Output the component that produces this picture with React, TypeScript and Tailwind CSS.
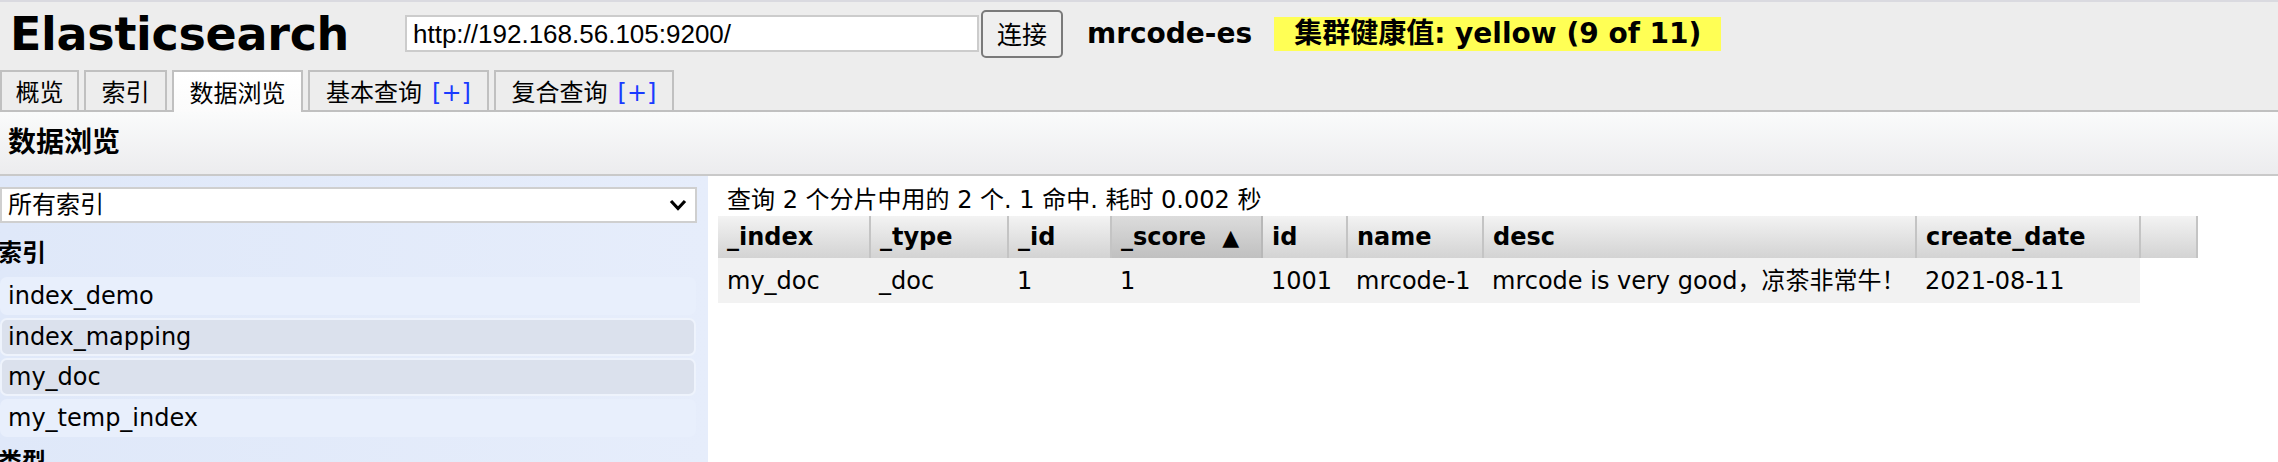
import React from "react";

const tabs = [
  { label: "概览", w: "w-[79px]", active: false, plus: false },
  { label: "索引", w: "w-[83px]", active: false, plus: false },
  { label: "数据浏览", w: "w-[131px]", active: true, plus: false },
  { label: "基本查询", w: "w-[181px]", active: false, plus: true },
  { label: "复合查询", w: "w-[180px]", active: false, plus: true },
];

const cols = [
  { name: "_index", w: "w-[152px]", sorted: false },
  { name: "_type", w: "w-[138px]", sorted: false },
  { name: "_id", w: "w-[103px]", sorted: false },
  { name: "_score", w: "w-[151px]", sorted: true },
  { name: "id", w: "w-[85px]", sorted: false },
  { name: "name", w: "w-[136px]", sorted: false },
  { name: "desc", w: "w-[433px]", sorted: false },
  { name: "create_date", w: "w-[224px]", sorted: false },
  { name: "", w: "w-[57px]", sorted: false },
];

const row = ["my_doc", "_doc", "1", "1", "1001", "mrcode-1", "mrcode is very good，凉茶非常牛！", "2021-08-11"];

const indices = [
  { name: "index_demo", sel: false },
  { name: "index_mapping", sel: true },
  { name: "my_doc", sel: true },
  { name: "my_temp_index", sel: false },
];

export default function App() {
  return (
    <div className="w-[2278px] h-[462px] overflow-hidden bg-white text-black font-['DejaVu_Sans','Noto_Sans_CJK_SC',sans-serif]">
      <div className="bg-[#ededed] border-t-2 border-[#dadae0]">
        <div className="flex items-center h-[63px]">
          <h1 className="ml-[10px] w-[395px] text-[46px] font-bold leading-none tracking-[-0.3px]">Elasticsearch</h1>
          <div className="w-[574px] h-[37px] border-2 border-[#cccccc] bg-white pl-[6px] flex items-center font-['Liberation_Sans',sans-serif] text-[26px] leading-none">
            http://192.168.56.105:9200/
          </div>
          <button className="ml-[2px] w-[82px] h-[48px] border-2 border-[#7a7a7a] rounded-[5px] bg-[#efefef] text-[25px] leading-none flex items-center justify-center font-['Noto_Sans_CJK_SC',sans-serif]">
            连接
          </button>
          <span className="ml-[24px] font-bold text-[28px] leading-none">mrcode-es</span>
          <span className="ml-[22px] h-[34px] px-[20px] bg-[#ffff55] font-bold text-[28px] leading-none flex items-center">
            集群健康值: yellow (9 of 11)
          </span>
        </div>
        <div className="flex items-end mt-[5px] h-[40px] gap-[5px] border-b-2 border-[#c0c0c0] box-content">
          {tabs.map((t) => (
            <div
              key={t.label}
              className={
                t.active
                  ? `${t.w} h-[42px] mb-[-2px] border-2 border-b-0 border-[#c0c0c0] bg-gradient-to-b from-white to-[#fbfbfb] flex items-center justify-center text-[24px] pt-[3px]`
                  : `${t.w} h-[40px] border-2 border-b-0 border-[#c0c0c0] bg-[#ededed] flex items-center justify-center text-[24px] pt-[3px]`
              }
            >
              <span>{t.label}</span>
              {t.plus && <span className="ml-[10px] text-[#1a3bff]">[+]</span>}
            </div>
          ))}
        </div>
      </div>

      <div className="h-[64px] bg-gradient-to-b from-[#fafbfb] to-[#ececee] border-b-2 border-[#c9c9c9] flex items-center pl-[8px]">
        <span className="text-[28px] font-bold leading-none">数据浏览</span>
      </div>

      <div className="flex h-[286px]">
        <div className="w-[708px] shrink-0 bg-gradient-to-r from-[#dfe8f9] to-[#e6edfb] pt-[11px]">
          <div className="w-[697px] h-[36px] border-2 border-[#cfcfcf] bg-white flex items-center justify-between pl-[6px] pr-[8px] text-[24px] leading-none">
            <span>所有索引</span>
            <svg width="18" height="12" viewBox="0 0 18 12">
              <polyline points="2,2 9,9.5 16,2" fill="none" stroke="#000" strokeWidth="3.2" />
            </svg>
          </div>
          <div className="mt-[15px] -ml-[2px] text-[24px] font-bold leading-[30px]">索引</div>
          <div className="mt-[9px] flex flex-col gap-[2.5px]">
            {indices.map((i) => (
              <div
                key={i.name}
                className={
                  i.sel
                    ? "w-[696px] h-[38px] rounded-[7px] border-2 border-[#eef3fc] bg-[#dbe1ed] pl-[6px] flex items-center text-[24px]"
                    : "w-[696px] h-[38px] rounded-[7px] border-2 border-transparent bg-[#e8effc] pl-[6px] flex items-center text-[24px]"
                }
              >
                {i.name}
              </div>
            ))}
          </div>
          <div className="mt-[10px] -ml-[2px] text-[24px] font-bold leading-[30px]">类型</div>
        </div>

        <div className="pl-[10px] pt-[9px]">
          <div className="pl-[9px] text-[24px] leading-[30px]">查询 2 个分片中用的 2 个. 1 命中. 耗时 0.002 秒</div>
          <table className="mt-[1px] table-fixed border-collapse">
            <thead>
              <tr>
                {cols.map((c, idx) => (
                  <th
                    key={idx}
                    className={
                      c.sorted
                        ? `${c.w} h-[42px] p-0 pl-[9px] text-left font-bold text-[24px] leading-none bg-gradient-to-b from-[#dcdcdc] to-[#c0c0c0] border-r-2 border-[#b8b8b8] whitespace-nowrap`
                        : `${c.w} h-[42px] p-0 pl-[9px] text-left font-bold text-[24px] leading-none bg-gradient-to-b from-[#f3f3f3] to-[#d3d3d3] border-r-2 border-[#c4c4c4] whitespace-nowrap`
                    }
                  >
                    {c.name}
                    {c.sorted && <span className="ml-[16px] text-[22px]">▲</span>}
                  </th>
                ))}
              </tr>
            </thead>
            <tbody>
              <tr>
                {row.map((v, idx) => (
                  <td key={idx} className="h-[45px] p-0 pl-[9px] bg-[#f2f2f2] text-[24px] leading-none whitespace-nowrap">
                    {v}
                  </td>
                ))}
                <td className="p-0 bg-white"></td>
              </tr>
            </tbody>
          </table>
        </div>
      </div>
    </div>
  );
}
